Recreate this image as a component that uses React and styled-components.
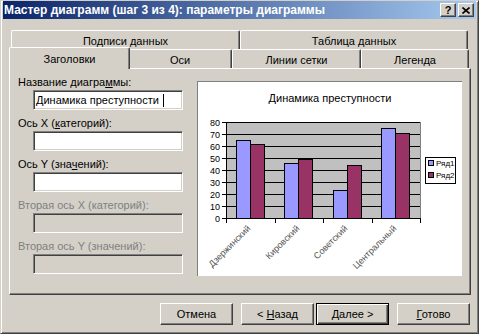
import React from 'react';
import styled, { createGlobalStyle, css } from 'styled-components';

const GlobalStyle = createGlobalStyle`
  html, body { margin: 0; padding: 0; background: #d4d0c8; }
  body {
    font-family: "Liberation Sans", Arial, sans-serif;
    font-size: 11px;
    color: #000;
  }
  * { box-sizing: border-box; }
`;

const series = [
  { name: 'Ряд1', color: '#9999ff', values: [65, 46, 23, 75] },
  { name: 'Ряд2', color: '#993366', values: [62, 49, 44, 71] },
];
const categories = ['Дзержинский', 'Кировский', 'Советский', 'Центральный'];

const PLOT = { x: 28, y: 40, w: 194, h: 96, max: 80 };

const Chart = () => {
  const catW = PLOT.w / categories.length;
  const scale = PLOT.h / PLOT.max;
  const bottom = PLOT.y + PLOT.h;
  const ticks = [0, 10, 20, 30, 40, 50, 60, 70, 80];

  return (
    <svg width="264" height="194" shapeRendering="crispEdges">
      <text x="132" y="20" textAnchor="middle" fontSize="11" fontFamily="Liberation Sans, Arial, sans-serif">
        Динамика преступности
      </text>

      <rect x={PLOT.x + 0.5} y={PLOT.y + 0.5} width={PLOT.w} height={PLOT.h} fill="#c0c0c0" stroke="#808080" />

      {ticks.map((t) => {
        const y = Math.round(bottom - t * scale) + 0.5;
        return (
          <g key={t}>
            <line x1={PLOT.x - 4} x2={PLOT.x + PLOT.w} y1={y} y2={y} stroke="#000" />
            <text x={PLOT.x - 6} y={y + 3} textAnchor="end" fontSize="9" fontFamily="Liberation Sans, Arial, sans-serif">
              {t}
            </text>
          </g>
        );
      })}

      {categories.map((c, i) => {
        const start = PLOT.x + i * catW;
        const x1 = Math.round(start + 9.5);
        return series.map((s, k) => {
          const h = Math.round(s.values[i] * scale);
          return (
            <rect
              key={c + s.name}
              x={x1 + k * 14 + 0.5}
              y={bottom - h + 0.5}
              width={14}
              height={h}
              fill={s.color}
              stroke="#000"
            />
          );
        });
      })}

      <line x1={PLOT.x + 0.5} x2={PLOT.x + 0.5} y1={PLOT.y} y2={bottom + 1} stroke="#000" />
      <line x1={PLOT.x} x2={PLOT.x + PLOT.w + 1} y1={bottom + 0.5} y2={bottom + 0.5} stroke="#000" />
      {[0, 1, 2, 3, 4].map((i) => {
        const x = Math.round(PLOT.x + i * catW) + 0.5;
        return <line key={i} x1={x} x2={x} y1={bottom} y2={bottom + 5} stroke="#000" />;
      })}

      {categories.map((c, i) => {
        const cx = Math.round(PLOT.x + (i + 0.5) * catW) + 1;
        const cy = 147;
        return (
          <text
            key={c}
            x={cx}
            y={cy}
            textAnchor="end"
            fontSize="9"
            fill="#555"
            fontFamily="Liberation Sans, Arial, sans-serif"
            transform={`rotate(-45 ${cx} ${cy})`}
            shapeRendering="auto"
          >
            {c}
          </text>
        );
      })}

      <rect x="227.5" y="75.5" width="30" height="26" fill="#fff" stroke="#000" />
      {series.map((s, k) => (
        <g key={s.name}>
          <rect x="230.5" y={78.5 + k * 12} width="5" height="5" fill={s.color} stroke="#000" />
          <text x="238" y={84 + k * 12} fontSize="8" fontFamily="Liberation Sans, Arial, sans-serif">
            {s.name}
          </text>
        </g>
      ))}
    </svg>
  );
};

const App = () => (
  <>
    <GlobalStyle />
    <Window>
      <TitleBar>
        <TitleText>Мастер диаграмм (шаг 3 из 4): параметры диаграммы</TitleText>
        <CaptionButton aria-label="help">
          <HelpGlyph>?</HelpGlyph>
        </CaptionButton>
        <CaptionButton aria-label="close" $gap>
          <svg width="8" height="7" viewBox="0 0 8 7">
            <path d="M0.5 0.5 L7.5 6.5 M7.5 0.5 L0.5 6.5" stroke="#000" strokeWidth="1.6" fill="none" />
          </svg>
        </CaptionButton>
      </TitleBar>

      <Tabs>
        <TabRow>
          <Tab $w={229}>Подписи данных</Tab>
          <Tab $w={228}>Таблица данных</Tab>
        </TabRow>
        <TabRow>
          <Tab $w={117} $active>Заголовки</Tab>
          <Tab $w={104}>Оси</Tab>
          <Tab $w={129}>Линии сетки</Tab>
          <Tab $w={108}>Легенда</Tab>
        </TabRow>
        <Panel>
          <Fields>
            <Field>
              <Label>Название диагра<u>м</u>мы:</Label>
              <TextBox>
                Динамика преступности
                <Caret />
              </TextBox>
            </Field>
            <Field>
              <Label>Ось X (<u>к</u>атегорий):</Label>
              <TextBox />
            </Field>
            <Field>
              <Label>Ось Y (зна<u>ч</u>ений):</Label>
              <TextBox />
            </Field>
            <Field>
              <Label $disabled>Вторая ось X (категорий):</Label>
              <TextBox $disabled />
            </Field>
            <Field>
              <Label $disabled>Вторая ось Y (значений):</Label>
              <TextBox $disabled />
            </Field>
          </Fields>
          <ChartBox>
            <Chart />
          </ChartBox>
        </Panel>
      </Tabs>

      <Footer>
        <Button $mr={8}>Отмена</Button>
        <Button $mr={2}>&lt; <u>Н</u>азад</Button>
        <Button $mr={8} $default><u>Д</u>алее &gt;</Button>
        <Button><u>Г</u>отово</Button>
      </Footer>
    </Window>
  </>
);

const Window = styled.div`
  width: 479px;
  height: 334px;
  background: #d4d0c8;
  border: 1px solid;
  border-color: #d4d0c8 #404040 #404040 #d4d0c8;
  box-shadow: inset 1px 1px #fff, inset -1px -1px #808080;
  padding: 0 2px;
  display: flex;
  flex-direction: column;
`;

const TitleBar = styled.div`
  height: 18px;
  display: flex;
  align-items: center;
  padding: 0 2px 0 1px;
  background: linear-gradient(to right, #0a246a, #a6caf0);
  color: #fff;
  font-weight: bold;
  font-size: 12px;
`;

const TitleText = styled.span`
  flex: 1;
  white-space: nowrap;
`;

const CaptionButton = styled.button`
  width: 16px;
  height: 14px;
  padding: 0;
  margin-left: ${({ $gap }) => ($gap ? '2px' : '0')};
  background: #d4d0c8;
  border: 1px solid;
  border-color: #fff #404040 #404040 #fff;
  box-shadow: inset -1px -1px #808080;
  display: flex;
  align-items: center;
  justify-content: center;
`;

const HelpGlyph = styled.span`
  font: bold 11px "Liberation Sans", Arial, sans-serif;
  color: #000;
  line-height: 11px;
`;

const Tabs = styled.div`
  margin: 11px 5px 0 6px;
  display: flex;
  flex-direction: column;
`;

const TabRow = styled.div`
  display: flex;
  align-items: flex-end;
  height: 19px;
  padding-left: 2px;
`;

const Tab = styled.div`
  flex: none;
  width: ${({ $w }) => $w}px;
  height: 19px;
  padding-top: 2px;
  display: flex;
  align-items: center;
  justify-content: center;
  white-space: nowrap;
  background: #d4d0c8;
  border-top: 1px solid #fff;
  border-left: 1px solid #fff;
  border-right: 1px solid #404040;
  box-shadow: inset -1px 0 #808080;
  border-radius: 2px 2px 0 0;

  ${({ $active, $w }) =>
    $active &&
    css`
      position: relative;
      z-index: 1;
      width: ${$w + 4}px;
      height: 22px;
      padding-top: 0;
      margin: 0 -2px -1px;
    `}
`;

const Panel = styled.div`
  height: 227px;
  border-top: 1px solid #fff;
  border-left: 1px solid #fff;
  border-right: 1px solid #404040;
  border-bottom: 1px solid #404040;
  box-shadow: inset -1px -1px #808080;
  padding: 6px 8px 0;
  display: flex;
  align-items: flex-start;
  gap: 14px;
`;

const Fields = styled.div`
  width: 165px;
  display: flex;
  flex-direction: column;
  gap: 6px;
`;

const Field = styled.div`
  display: flex;
  flex-direction: column;
  gap: 1px;
`;

const Label = styled.div`
  height: 14px;
  line-height: 14px;
  white-space: nowrap;
  color: ${({ $disabled }) => ($disabled ? '#808080' : '#000')};
`;

const TextBox = styled.div`
  margin-left: 15px;
  width: 150px;
  height: 20px;
  padding: 0 2px;
  display: flex;
  align-items: center;
  white-space: nowrap;
  background: ${({ $disabled }) => ($disabled ? '#d4d0c8' : '#fff')};
  border: 1px solid;
  border-color: #808080 #fff #fff #808080;
  box-shadow: inset 1px 1px #404040, inset -1px -1px #d4d0c8;
`;

const Caret = styled.span`
  display: inline-block;
  width: 0;
  height: 13px;
  margin-left: 4px;
  border-left: 1px solid #000;
`;

const ChartBox = styled.div`
  margin-top: 6px;
  width: 265px;
  height: 195px;
  background: #fff;
  border-top: 1px solid #808080;
  border-left: 1px solid #808080;
  display: flex;
`;

const Footer = styled.div`
  margin-top: 8px;
  padding-right: 6px;
  display: flex;
  justify-content: flex-end;
`;

const Button = styled.button`
  width: 73px;
  height: 22px;
  padding: 0;
  margin-right: ${({ $mr = 0 }) => $mr}px;
  font: 11px "Liberation Sans", Arial, sans-serif;
  color: #000;
  background: #d4d0c8;
  border: 1px solid;
  border-color: #fff #404040 #404040 #fff;
  box-shadow: inset -1px -1px #808080;

  ${({ $default }) =>
    $default &&
    css`
      border-color: #000;
      box-shadow: inset 1px 1px #fff, inset -1px -1px #404040, inset -2px -2px #808080;
    `}
`;

export default App;
